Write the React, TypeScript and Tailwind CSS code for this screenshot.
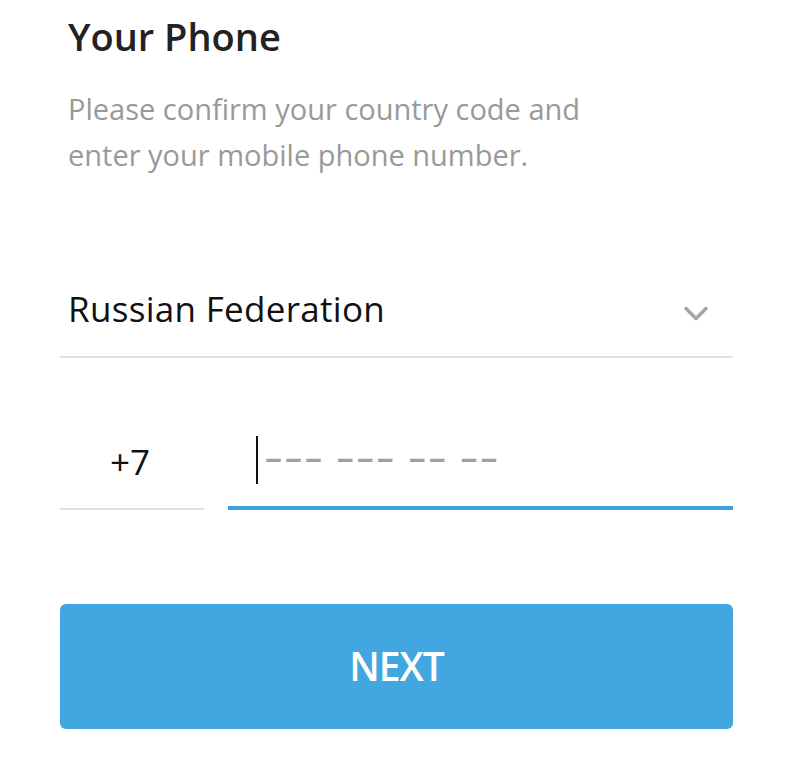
import React from 'react';

export default function App() {
    return (
        <div className="w-[800px] h-[757px] bg-white font-['Open_Sans',sans-serif] overflow-hidden">
            <div className="ml-[60px] w-[673px] pt-[10px]">

                {/* Header */}
                <h1 className="pl-2 text-[38px] leading-[52px] font-semibold text-[#222]">Your Phone</h1>
                <p className="pl-2 mt-[24px] text-[29px] leading-[46px] text-[#999] w-[540px]">
                    Please confirm your country code and enter your mobile phone number.
                </p>

                {/* Country select */}
                <div className="mt-[84px] flex items-center justify-between pl-2 pr-[24px] h-[96px] border-b-2 border-[#e1e1e1]">
                    <span className="text-[35px] tracking-[0.3px] text-[#111]">Russian Federation</span>
                    <svg width="26" height="18" viewBox="0 0 26 18" className="mt-[10px]">
                        <path d="M3 3.5 L13 13.5 L23 3.5" fill="none" stroke="#a3a3a3" strokeWidth="3.5" strokeLinecap="round" strokeLinejoin="round" />
                    </svg>
                </div>

                {/* Phone row */}
                <div className="mt-[62px] flex items-end gap-[24px]">
                    <div className="w-[144px] h-[90px] pb-[4px] flex items-center justify-center border-b-2 border-[#e1e1e1] pr-[4px]">
                        <span className="text-[35px] text-[#111]">+7</span>
                    </div>
                    <div className="flex-1 h-[90px] pb-[6px] flex items-center pl-[28px] border-b-[4px] border-[#3fa3e0]">
                        <span className="w-[2px] h-[48px] bg-[#111]"></span>
                        <span className="ml-[7px] mb-[6px] text-[34px] font-semibold text-[#a0a0a0] tracking-[3px] whitespace-pre">––– ––– –– ––</span>
                    </div>
                </div>

                {/* Button */}
                <button className="mt-[94px] w-full h-[125px] rounded-[6px] bg-[#42a6e1] text-white text-[39px] font-semibold tracking-[-1px]">
                    NEXT
                </button>
            </div>
        </div>
    );
}
